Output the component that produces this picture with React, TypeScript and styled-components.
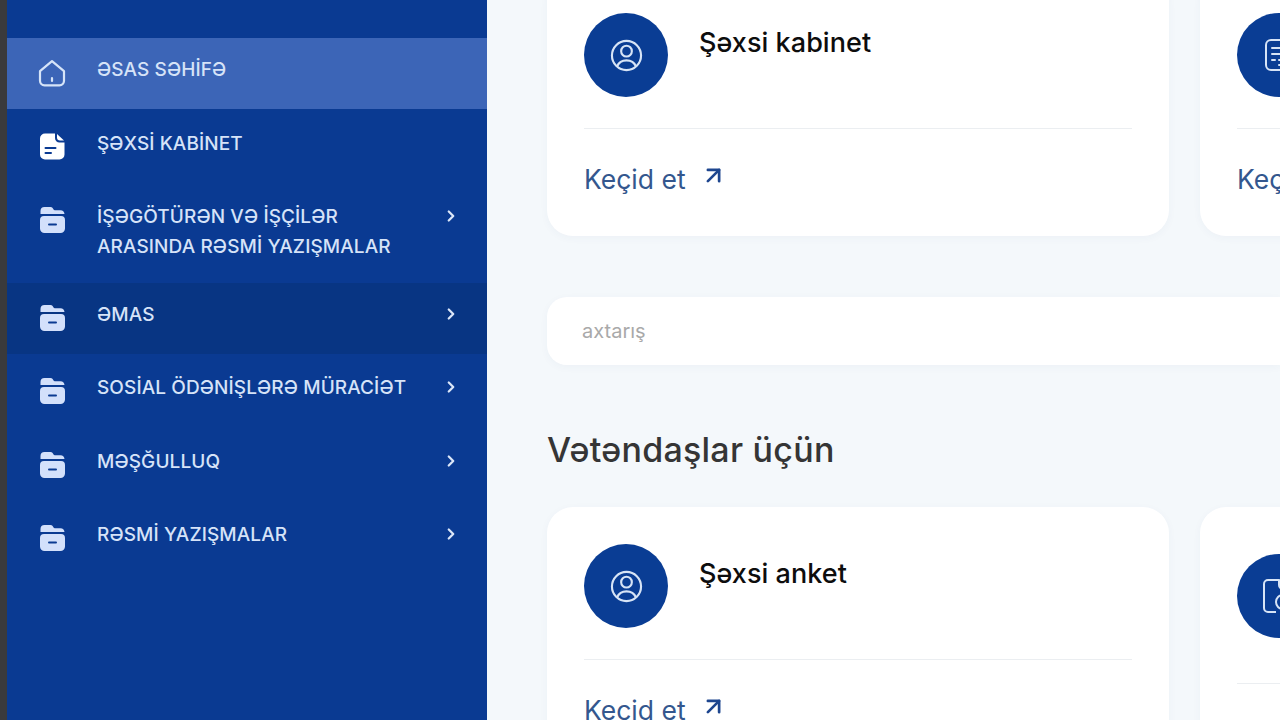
import styled, { createGlobalStyle } from 'styled-components';
import { ArrowUpRight, ChevronRight } from 'lucide-react';

const GlobalStyle = createGlobalStyle`
  html,
  body {
    margin: 0;
    height: 720px;
    overflow: hidden;
    background: #f4f8fb;
  }

  * {
    box-sizing: border-box;
  }
`;

const Page = styled.div`
  display: flex;
  width: 1280px;
  height: 720px;
  overflow: hidden;
  border-left: 7px solid #3a3a3c;
`;

const Sidebar = styled.nav`
  display: flex;
  flex-direction: column;
  flex: 0 0 480px;
  gap: 2.5px;
  padding-top: 38px;
  background: #0a3a92;
`;

const MenuRow = styled.a<{ $state?: 'active' | 'dark' }>`
  display: flex;
  align-items: flex-start;
  min-height: 71px;
  padding: 17px 27px 18px 31px;
  color: #d6e3f8;
  background: ${(p) =>
    p.$state === 'active' ? '#3c65b7' : p.$state === 'dark' ? '#083583' : 'transparent'};
`;

const MenuIcon = styled.span`
  display: flex;
  flex: 0 0 28px;
  align-items: center;
  justify-content: center;
  height: 28px;
  margin-top: 4px;
`;

const MenuLabel = styled.span`
  flex: 1;
  margin-left: 31px;
  font-family: Inter, 'Liberation Sans', sans-serif;
  font-size: 19px;
  font-weight: 500;
  line-height: 30px;
  letter-spacing: 0.1px;
`;

const MenuChevron = styled(ChevronRight)`
  flex: 0 0 18px;
  margin-top: 5px;
  color: #dbe6f8;
`;

const Main = styled.main`
  flex: 1;
  min-width: 0;
  margin-top: -24px;
  padding-left: 60px;
`;

const CardGrid = styled.div`
  display: grid;
  grid-template-columns: 622px 622px;
  gap: 31px;
`;

const Card = styled.section`
  padding: 37px;
  border-radius: 26px;
  background: #fff;
  box-shadow: 0 2px 8px rgba(40, 70, 120, 0.04);
`;

const CardHead = styled.header<{ $tall?: boolean }>`
  display: flex;
  align-items: ${(p) => (p.$tall ? 'center' : 'flex-start')};
  gap: 31px;
  min-height: ${(p) => (p.$tall ? 108 : 84)}px;
  padding-bottom: ${(p) => (p.$tall ? 4 : 0)}px;
`;

const IconCircle = styled.div`
  display: flex;
  flex: 0 0 84px;
  align-items: center;
  justify-content: center;
  height: 84px;
  border-radius: 50%;
  color: #d7e4f6;
  background: #0a3d94;
`;

const CardTitle = styled.h3`
  margin: 10px 0 0;
  color: #0d0d0d;
  font-family: Inter, 'Liberation Sans', sans-serif;
  font-size: 27px;
  font-weight: 500;
  line-height: 40px;
  letter-spacing: 0.05px;
`;

const Rule = styled.hr`
  height: 1px;
  margin: 31px 0 30px;
  border: 0;
  background: #ebeef1;
`;

const GoLink = styled.a`
  display: flex;
  align-items: center;
  gap: 14px;
  color: #34578e;
  font-family: Inter, 'Liberation Sans', sans-serif;
  font-size: 26.5px;
  font-weight: 400;
  line-height: 40px;

  svg {
    margin-top: -7px;
    color: #1e468f;
  }
`;

const SearchBox = styled.input`
  display: block;
  width: 100%;
  height: 68px;
  margin-top: 61px;
  padding: 0 35px;
  border: 0;
  border-radius: 20px 0 0 20px;
  outline: 0;
  background: #fff;
  box-shadow: 0 2px 8px rgba(40, 70, 120, 0.04);
  font-family: Inter, 'Liberation Sans', sans-serif;
  font-size: 20px;

  &::placeholder {
    color: #a9a9a9;
    opacity: 1;
  }
`;

const SectionTitle = styled.h2`
  margin: 61px 0 33px;
  color: #353535;
  font-family: Inter, 'Liberation Sans', sans-serif;
  font-size: 34px;
  font-weight: 500;
  line-height: 48px;
  letter-spacing: 0.25px;
`;

const HomeIcon = () => (
  <svg width="28" height="28" viewBox="0 0 28 28" fill="none" stroke="#d6e4f8" strokeWidth="2.2">
    <path d="M2 12.2 14 2.200l12 10v9.600a4.500 4.500 0 0 1-4.500 4.500h-15a4.500 4.500 0 0 1-4.500-4.500z" strokeLinejoin="round" />
    <path d="M14 19v3" strokeLinecap="round" />
  </svg>
);

const DocIcon = () => (
  <svg width="25" height="27" viewBox="0 0 25 27">
    <path
      d="M5 0.500h10v4.500a4.500 4.500 0 0 0 4.500 4.500h5v12a5 5 0 0 1-5 5H5a5 5 0 0 1-5-5V5.500a5 5 0 0 1 5-5z"
      fill="#fff"
    />
    <path d="M17 1l7 6.500h-4a3 3 0 0 1-3-3z" fill="#fff" />
    <path d="M5.500 15h10M5.500 20h5.500" stroke="#0a3a92" strokeWidth="2" strokeLinecap="round" />
  </svg>
);

const FolderIcon = () => (
  <svg width="25" height="26" viewBox="0 0 25 26" fill="#d3e0fb">
    <path d="M4.500 0h6c1.800 0 2.300 1.100 2.900 2.200.4.800 1 1.100 1.900 1.100h5.200c2.300 0 3.800 1.400 4 3.700H0.500V4a4 4 0 0 1 4-4z" />
    <path d="M4 9h17a4 4 0 0 1 4 4v8.500a4.500 4.500 0 0 1-4.500 4.500h-16A4.500 4.500 0 0 1 0 21.500V13a4 4 0 0 1 4-4z" />
    <path d="M9 17.500h7" stroke="#0a3a92" strokeWidth="2" strokeLinecap="round" />
  </svg>
);

const UserIcon = () => (
  <svg width="33" height="33" viewBox="0 0 34 34" fill="none" stroke="currentColor" strokeWidth="2.200">
    <circle cx="17" cy="17" r="15" />
    <circle cx="17" cy="12.500" r="5.500" />
    <path d="M7.500 28c1.500-4 5-6 9.500-6s8 2 9.500 6" />
  </svg>
);

const ListIcon = () => (
  <svg width="30" height="34" viewBox="0 0 30 34" fill="none" stroke="currentColor" strokeWidth="2">
    <path d="M9 2h14a5 5 0 0 1 5 5v20a5 5 0 0 1-5 5H7a5 5 0 0 1-5-5V7a5 5 0 0 1 5-5z" />
    <path d="M8 10h14M8 16h14M8 22h3M15 22h7M15 27h7" strokeLinecap="round" />
  </svg>
);

const FileIcon = () => (
  <svg width="34" height="36" viewBox="0 0 34 36" fill="none" stroke="currentColor" strokeWidth="2">
    <path d="M14 34H6a4 4 0 0 1-4-4V6a4 4 0 0 1 4-4h11l9 9v3" />
    <path d="M17 2v5a4 4 0 0 0 4 4h5" />
    <circle cx="21" cy="24" r="7" />
  </svg>
);

const menu = [
  { label: 'ƏSAS SƏHİFƏ', icon: <HomeIcon />, state: 'active' as const },
  { label: 'ŞƏXSİ KABİNET', icon: <DocIcon /> },
  {
    label: (
      <>
        İŞƏGÖTÜRƏN VƏ İŞÇİLƏR
        <br />
        ARASINDA RƏSMİ YAZIŞMALAR
      </>
    ),
    icon: <FolderIcon />,
    more: true,
  },
  { label: 'ƏMAS', icon: <FolderIcon />, state: 'dark' as const, more: true },
  { label: 'SOSİAL ÖDƏNİŞLƏRƏ MÜRACİƏT', icon: <FolderIcon />, more: true },
  { label: 'MƏŞĞULLUQ', icon: <FolderIcon />, more: true },
  { label: 'RƏSMİ YAZIŞMALAR', icon: <FolderIcon />, more: true },
];

const LinkRow = () => (
  <GoLink>
    Keçid et
    <ArrowUpRight size={27} strokeWidth={2.4} />
  </GoLink>
);

export default function App() {
  return (
    <Page>
      <GlobalStyle />
      <Sidebar>
        {menu.map((item, i) => (
          <MenuRow key={i} $state={item.state}>
            <MenuIcon>{item.icon}</MenuIcon>
            <MenuLabel>{item.label}</MenuLabel>
            {item.more && <MenuChevron size={18} strokeWidth={3} />}
          </MenuRow>
        ))}
      </Sidebar>
      <Main>
        <CardGrid>
          <Card>
            <CardHead>
              <IconCircle>
                <UserIcon />
              </IconCircle>
              <CardTitle>Şəxsi kabinet</CardTitle>
            </CardHead>
            <Rule />
            <LinkRow />
          </Card>
          <Card>
            <CardHead>
              <IconCircle>
                <ListIcon />
              </IconCircle>
            </CardHead>
            <Rule />
            <LinkRow />
          </Card>
        </CardGrid>
        <SearchBox placeholder="axtarış" />
        <SectionTitle>Vətəndaşlar üçün</SectionTitle>
        <CardGrid>
          <Card>
            <CardHead>
              <IconCircle>
                <UserIcon />
              </IconCircle>
              <CardTitle>Şəxsi anket</CardTitle>
            </CardHead>
            <Rule />
            <LinkRow />
          </Card>
          <Card>
            <CardHead $tall>
              <IconCircle>
                <FileIcon />
              </IconCircle>
            </CardHead>
            <Rule />
            <LinkRow />
          </Card>
        </CardGrid>
      </Main>
    </Page>
  );
}
